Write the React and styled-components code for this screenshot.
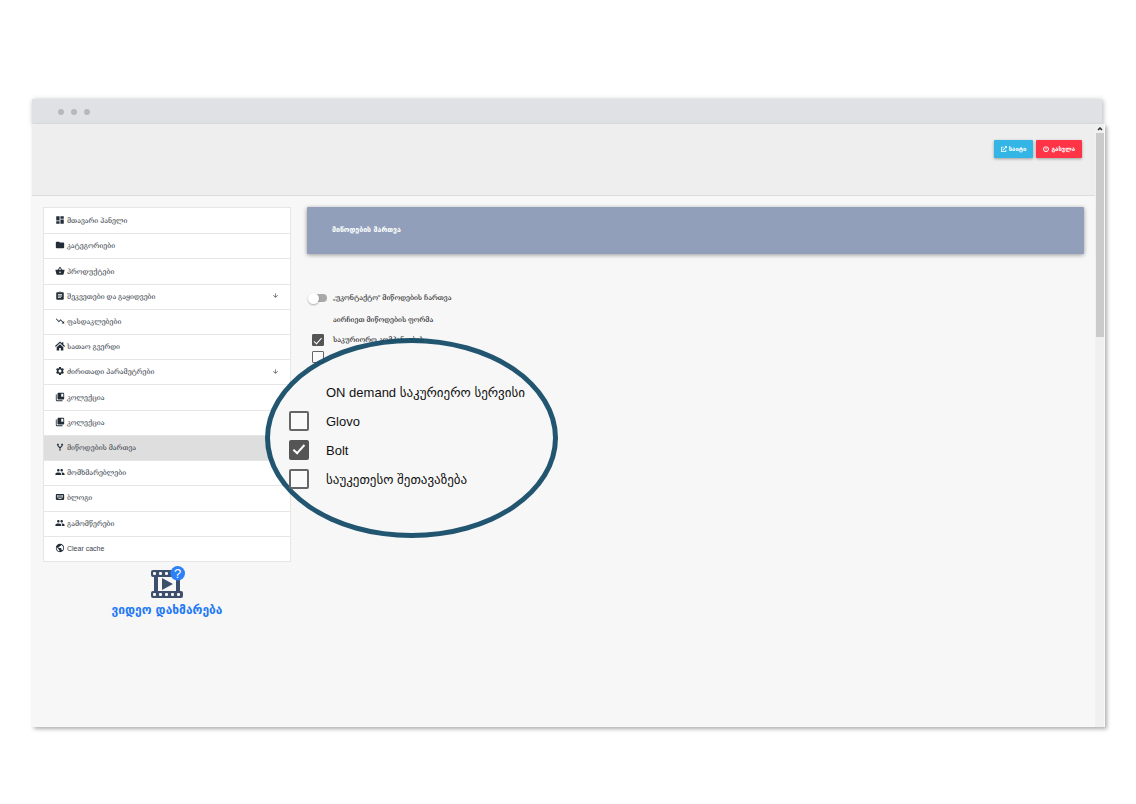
import React from "react";
import styled, { createGlobalStyle, css } from "styled-components";
import {
  MdDashboard, MdFolder, MdShoppingBasket, MdAssignment, MdTrendingDown, MdSettings,
  MdCollectionsBookmark, MdPeople, MdKeyboard, MdPublic, MdArrowDownward,
} from "react-icons/md";
import { FaExternalLinkAlt, FaPowerOff } from "react-icons/fa";

const GlobalStyle = createGlobalStyle`
  *, *::before, *::after { box-sizing: border-box; }
  body {
    margin: 0;
    background: #fff;
    color: #222;
    font: 7px/10px "Liberation Sans", "DejaVu Serif", serif;
  }
  button { font: inherit; }
`;

const Page = styled.div`
  display: flex;
  flex-direction: column;
  min-height: 100vh;
  padding: 99px 31px 77px 32px;
`;

const Browser = styled.div`
  flex: 1;
  display: flex;
  flex-direction: column;
`;

const TitleBar = styled.div`
  display: flex;
  align-items: center;
  gap: 7px;
  height: 25px;
  margin-right: 3px;
  padding: 0 26px;
  background: #e0e1e5;
  box-shadow: 1px 1px 5px rgba(0, 0, 0, 0.3);
`;

const Dot = styled.span`
  width: 6px;
  height: 6px;
  border-radius: 50%;
  background: #b3b8c1;
`;

const Viewport = styled.div`
  position: relative;
  flex: 1;
  display: flex;
  background: #f7f7f7;
  box-shadow: 2px 2px 4px rgba(0, 0, 0, 0.32);
`;

const Screen = styled.div`
  flex: 1;
  min-width: 0;
`;

const Header = styled.header`
  display: flex;
  justify-content: flex-end;
  align-items: flex-start;
  gap: 3px;
  height: 72px;
  padding: 16px 13px;
  background: #eee;
  border-bottom: 1px solid #dcdcdc;
`;

const HeaderButton = styled.button`
  display: flex;
  align-items: center;
  justify-content: center;
  gap: 2px;
  height: 18px;
  padding: 0 7px;
  border: 0;
  border-radius: 1px;
  color: #fff;
  background: ${(p) => p.$color};
  font-family: "Liberation Sans", "DejaVu Sans", sans-serif;
  font-size: 6px;
  font-weight: 700;
  white-space: nowrap;
  box-shadow: 0 1px 3px rgba(0, 0, 0, 0.35);
`;

const Columns = styled.div`
  display: grid;
  grid-template-columns: 248px 1fr;
  gap: 16px;
  padding: 11px;
`;

const Menu = styled.ul`
  display: grid;
  grid-auto-rows: 1fr;
  min-height: 355px;
  margin: 0;
  padding: 0;
  list-style: none;
  background: #fff;
  border: 1px solid #e6e6e6;
`;

const MenuItem = styled.li`
  display: grid;
  background: ${(p) => (p.$active ? "#dedede" : "transparent")};
  & + & { border-top: 1px solid ${(p) => (p.$strong ? "#cfcfcf" : "#e6e6e6")}; }
`;

const MenuLink = styled.a`
  display: flex;
  align-items: center;
  gap: 2px;
  padding: 0 11px;
  color: #3a434b;
  text-decoration: none;
  white-space: nowrap;
  svg { width: 7px; height: 7px; color: #444; margin-bottom: 2px; }
  svg:first-child { width: 10px; height: 10px; color: #222d38; }
`;

const MenuText = styled.span`
  flex: 1;
`;

const VideoHelp = styled.a`
  display: flex;
  flex-direction: column;
  align-items: center;
  gap: 3px;
  padding-top: 4px;
  color: #2379f5;
  font-family: "DejaVu Sans", sans-serif;
  font-size: 12px;
  line-height: 16px;
  font-weight: 700;
  text-decoration: none;
`;

const Main = styled.main`
  position: relative;
  min-width: 0;
`;

const Banner = styled.h1`
  margin: 0 0 33px;
  padding: 0 25px;
  font-family: "DejaVu Sans", sans-serif;
  font-size: 7px;
  line-height: 47px;
  color: #fff;
  background: #929fbb;
  border-radius: 1px;
  box-shadow: 0 1px 4px rgba(0, 0, 0, 0.4);
`;

const Field = styled.label`
  display: grid;
  grid-template-columns: 22px 1fr;
  align-items: center;
  justify-items: center;
  gap: 4px;
  height: ${(p) => p.$height}px;
  color: #111;
  span { justify-self: start; }
`;

const FormHeading = styled.h2`
  margin: 0;
  padding-left: 26px;
  font-size: 7px;
  line-height: 22px;
  font-weight: 400;
  color: #111;
`;

const Toggle = styled.input`
  appearance: none;
  display: flex;
  align-items: center;
  width: 18px;
  height: 8px;
  margin: 0;
  border-radius: 4px;
  background: #a9a9a9;
  &::before {
    content: "";
    width: 11px;
    height: 11px;
    margin-left: -1px;
    border-radius: 50%;
    background: #fff;
    box-shadow: 0 1px 2px rgba(0, 0, 0, 0.3);
  }
`;

const checkMark = css`
  &:checked { background: #555; border-color: #555; }
  &:checked::before {
    content: "";
    width: 35%;
    height: 75%;
    margin-bottom: 15%;
    border: solid #fff;
    border-width: 0 ${(p) => (p.$large ? 2 : 1)}px ${(p) => (p.$large ? 2 : 1)}px 0;
    transform: rotate(42deg);
  }
`;

const CheckBox = styled.input`
  appearance: none;
  display: flex;
  align-items: center;
  justify-content: center;
  width: ${(p) => (p.$large ? 20 : 12)}px;
  height: ${(p) => (p.$large ? 20 : 12)}px;
  margin: 0;
  border: ${(p) => (p.$large ? 2 : 1)}px solid #666;
  border-radius: ${(p) => (p.$large ? 2 : 1)}px;
  background: #fafafa;
  ${checkMark}
`;

const Lens = styled.section`
  position: absolute;
  left: -42px;
  top: 131px;
  width: 293px;
  height: 200px;
  padding: 37px 0 0 19px;
  border: 5px solid rgba(20, 75, 103, 0.94);
  border-radius: 50%;
  background: #f7f7f7;
  background-clip: padding-box;
  color: #111;
  font-family: "Liberation Sans", "DejaVu Sans", sans-serif;
  font-size: 13px;
  white-space: nowrap;
`;

const LensTitle = styled.h3`
  margin: 0;
  padding-left: 37px;
  font-size: 13px;
  line-height: 26px;
  font-weight: 400;
`;

const LensField = styled.label`
  display: flex;
  align-items: center;
  gap: 17px;
  height: 29px;
  span { padding-top: 3px; }
`;

const ScrollTrack = styled.div`
  display: flex;
  flex-direction: column;
  align-items: center;
  width: 10px;
  padding-top: 3px;
  gap: 2px;
  background: #f0f0f0;
  border-right: 1px solid #fafafa;
`;

const ScrollThumb = styled.div`
  width: 8px;
  height: 204px;
  background: #cbcbcb;
`;

const HouseIcon = () => (
  <svg viewBox="0 0 24 24" fill="currentColor" aria-hidden="true">
    <path d="M12 1 0 12l2 2.2L12 5l10 9.2 2-2.2-4-3.7V3h-3v2.6z" />
    <path d="M12 7.5 4 15v8h6v-6h4v6h6v-8z" />
  </svg>
);

const ForkIcon = () => (
  <svg viewBox="0 0 24 24" fill="none" stroke="currentColor" strokeWidth="2.500" aria-hidden="true">
    <path d="M12 21v-7L7 9V5M12 14l5-5V5" />
    <path d="m5 7 2-3 2 3zM15 7l2-3 2 3z" fill="currentColor" strokeWidth="1" />
  </svg>
);

const VideoIcon = () => (
  <svg width="35" height="33" viewBox="0 0 35 33" aria-hidden="true">
    <path fill="#3e4f6e" d="M3 4h28a2 2 0 0 1 2 2v3a2 2 0 0 1-2 2h-1v14h1a2 2 0 0 1 2 2v3a2 2 0 0 1-2 2H3a2 2 0 0 1-2-2v-3a2 2 0 0 1 2-2h1V11H3a2 2 0 0 1-2-2V6a2 2 0 0 1 2-2zm5 7v14h18V11z" />
    <path fill="#3e4f6e" d="m12 12 11 6-11 6z" />
    <g fill="#f7f7f7">
      {[3, 9, 15, 21, 27].map((x) => (
        <React.Fragment key={x}>
          <rect x={x} y="6" width="3" height="3" rx="1" />
          <rect x={x} y="27" width="3" height="3" rx="1" />
        </React.Fragment>
      ))}
    </g>
    <circle cx="27.700" cy="7.300" r="7.300" fill="#2d80f8" />
    <text x="27.700" y="12" fill="#fff" fontSize="13" fontFamily="Liberation Sans, sans-serif" fontWeight="400" textAnchor="middle">?</text>
  </svg>
);

const menu = [
  { icon: MdDashboard, text: "მთავარი პანელი" },
  { icon: MdFolder, text: "კატეგორიები" },
  { icon: MdShoppingBasket, text: "პროდუქტები" },
  { icon: MdAssignment, text: "შეკვეთები და გაყიდვები", more: true },
  { icon: MdTrendingDown, text: "ფასდაკლებები", strong: true },
  { icon: HouseIcon, text: "სათაო გვერდი" },
  { icon: MdSettings, text: "ძირითადი პარამეტრები", more: true },
  { icon: MdCollectionsBookmark, text: "კოლექცია" },
  { icon: MdCollectionsBookmark, text: "კოლექცია" },
  { icon: ForkIcon, text: "მიწოდების მართვა", active: true },
  { icon: MdPeople, text: "მომხმარებლები" },
  { icon: MdKeyboard, text: "ბლოგი" },
  { icon: MdPeople, text: "გამომწერები" },
  { icon: MdPublic, text: "Clear cache" },
];

export default function App() {
  return (
    <Page>
      <GlobalStyle />
      <Browser>
        <TitleBar><Dot /><Dot /><Dot /></TitleBar>
        <Viewport>
          <Screen>
            <Header>
              <HeaderButton type="button" $color="#33b5e5"><FaExternalLinkAlt />საიტი</HeaderButton>
              <HeaderButton type="button" $color="#ff3547"><FaPowerOff />გასვლა</HeaderButton>
            </Header>
            <Columns>
              <nav>
                <Menu>
                  {menu.map(({ icon: Icon, text, more, active, strong }, i) => (
                    <MenuItem key={i} $active={active} $strong={strong}>
                      <MenuLink href="#">
                        <Icon />
                        <MenuText>{text}</MenuText>
                        {more && <MdArrowDownward />}
                      </MenuLink>
                    </MenuItem>
                  ))}
                </Menu>
                <VideoHelp href="#"><VideoIcon />ვიდეო დახმარება</VideoHelp>
              </nav>
              <Main>
                <Banner>მიწოდების მართვა</Banner>
                <Field $height={22}><Toggle type="checkbox" role="switch" /><span>„უკონტაქტო“ მიწოდების ჩართვა</span></Field>
                <FormHeading>აირჩიეთ მიწოდების ფორმა</FormHeading>
                <Field $height={18}><CheckBox type="checkbox" defaultChecked /><span>საკურიორო კომპანიების</span></Field>
                <Field $height={16}><CheckBox type="checkbox" aria-label="Glovo" /></Field>
                <Lens>
                  <LensTitle>ON demand საკურიერო სერვისი</LensTitle>
                  <LensField><CheckBox $large type="checkbox" /><span>Glovo</span></LensField>
                  <LensField><CheckBox $large type="checkbox" defaultChecked /><span>Bolt</span></LensField>
                  <LensField><CheckBox $large type="checkbox" /><span>საუკეთესო შეთავაზება</span></LensField>
                </Lens>
              </Main>
            </Columns>
          </Screen>
          <ScrollTrack>
            <svg width="6" height="4" viewBox="0 0 6 4" aria-hidden="true"><path d="m1 3 2-2 2 2" fill="none" stroke="#333" strokeWidth="1.500" /></svg>
            <ScrollThumb />
          </ScrollTrack>
        </Viewport>
      </Browser>
    </Page>
  );
}
